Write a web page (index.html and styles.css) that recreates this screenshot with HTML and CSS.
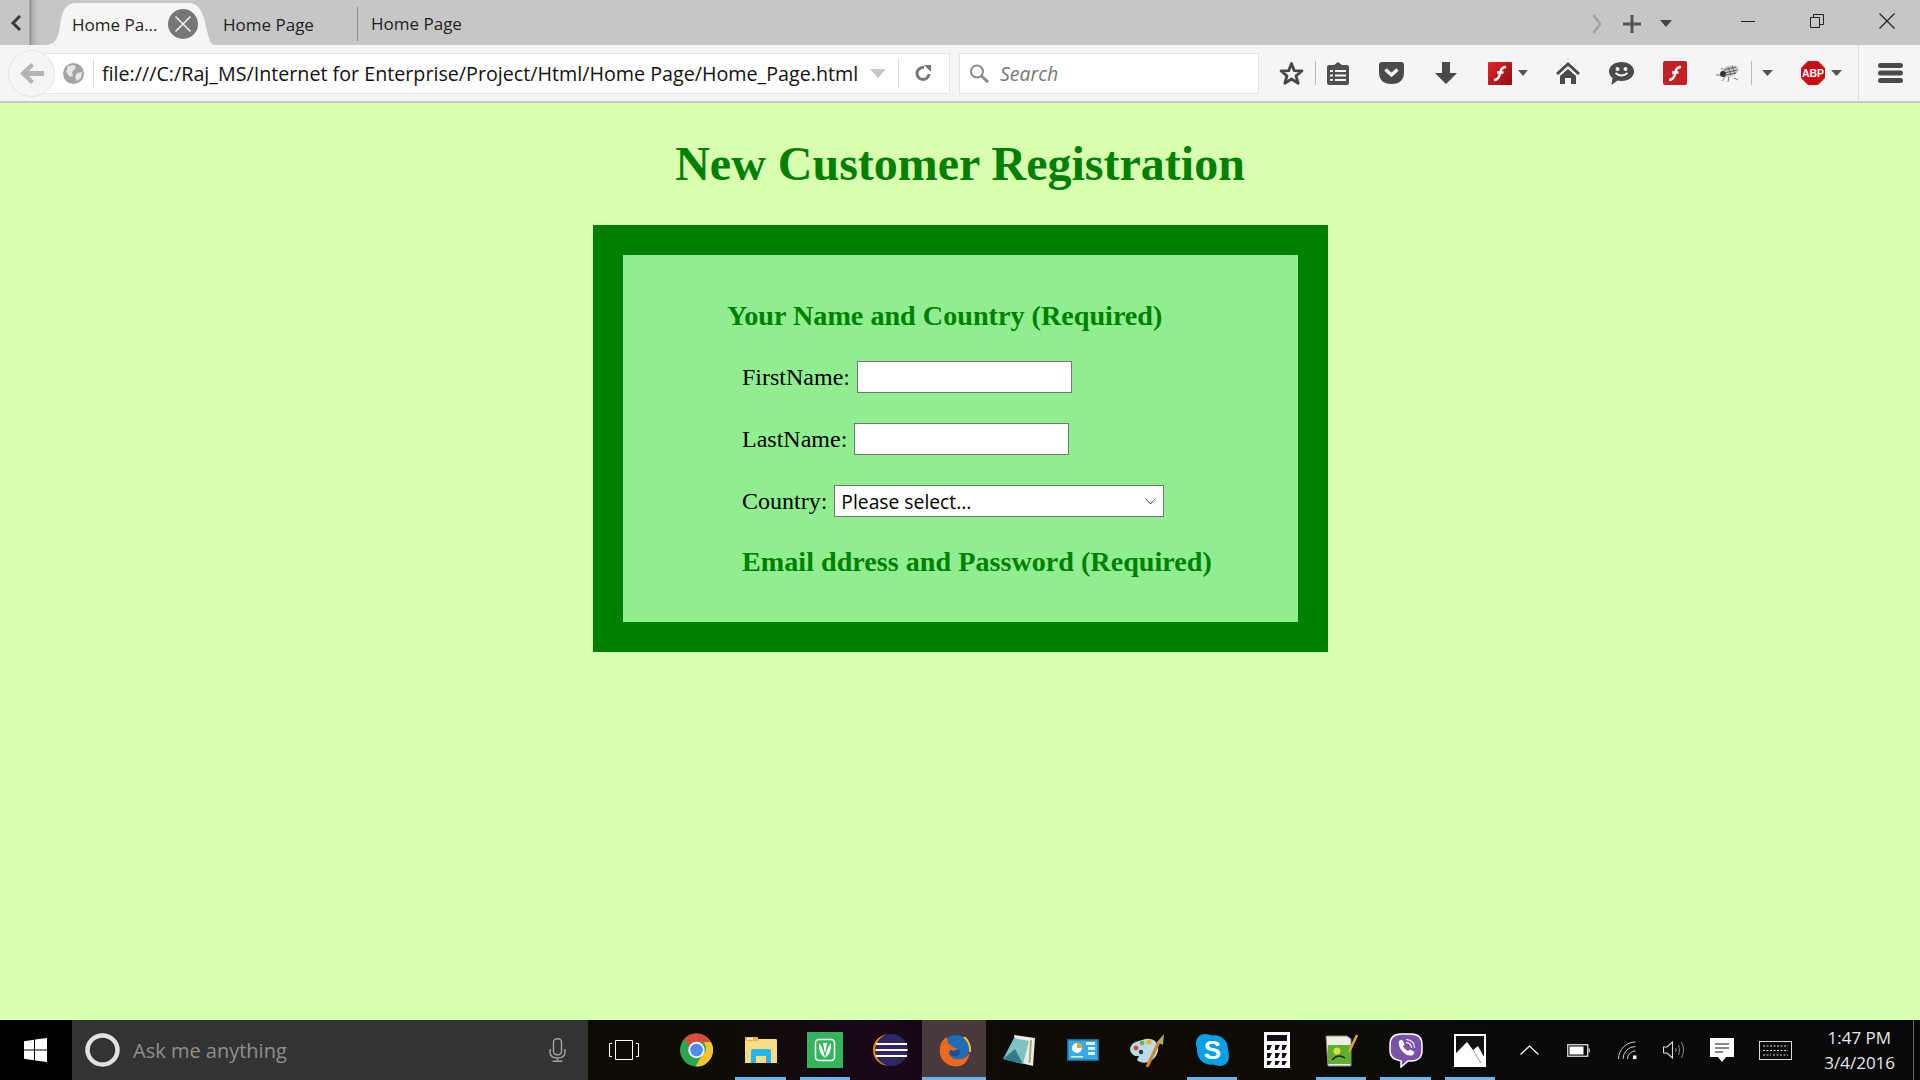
FILE: index.html
```html
<!DOCTYPE html>
<html>
<head>
<meta charset="utf-8">
<title>Home Page</title>
<link rel="stylesheet" href="styles.css">
</head>
<body>

<div class="tabbar">
  <div class="tab-scroll-left"><svg width="12" height="16" viewBox="0 0 12 16"><path d="M10 1 L3 8 L10 15" fill="none" stroke="#3c3c3c" stroke-width="3"/></svg></div>
  <div class="tab active">
    <span class="tab-title">Home Pa...</span>
    <span class="tab-close"><svg width="30" height="30" viewBox="0 0 30 30"><circle cx="15" cy="15" r="15" fill="#777"/><path d="M7.500 7.500 L22.500 22.500 M22.500 7.500 L7.500 22.500" stroke="#f0f0f0" stroke-width="1.600"/></svg></span>
  </div>
  <div class="tab tab-second">Home Page</div>
  <div class="tab tab-sep">Home Page</div>
  <div class="tabbar-right">
    <svg width="10" height="20" viewBox="0 0 10 20"><path d="M1.500 1 L8 10 L1.500 19" fill="none" stroke="#a0a0a0" stroke-width="2.400"/></svg>
    <svg class="tab-plus" width="18" height="18" viewBox="0 0 18 18"><path d="M9 0 V18 M0 9 H18" stroke="#555" stroke-width="3"/></svg>
    <svg class="tab-menu" width="12" height="7" viewBox="0 0 12 7"><path d="M0 0 H12 L6 7 Z" fill="#444"/></svg>
  </div>
  <div class="window-buttons">
    <svg width="14" height="14" viewBox="0 0 14 14"><path d="M0 7.500 H14" stroke="#222"/></svg>
    <svg width="14" height="14" viewBox="0 0 14 14"><path d="M.5 3.500 H9.500 V13.500 H.5 Z M3.500 3 V.5 H13.500 V10.500 H10" fill="none" stroke="#222"/></svg>
    <svg width="16" height="16" viewBox="0 0 16 16"><path d="M.5 .5 L15.500 15.500 M15.500 .5 L.5 15.500" stroke="#222" stroke-width="1.200"/></svg>
  </div>
</div>

<div class="navbar">
  <div class="back-btn"><svg width="24" height="21" viewBox="0 0 24 21"><path d="M11 0 L0 10.500 L11 21 L14 18 L9 13 H24 V8 H9 L14 3 Z" fill="#b4b4b4"/></svg></div>
  <div class="urlbar">
    <svg class="globe" width="21" height="21" viewBox="0 0 21 21"><circle cx="10.500" cy="10.500" r="10.500" fill="#a4a4a4"/><path d="M5 3 L11 2 L13 5 L9 9 L10 13 L7 14 L3 9 Z M14 10 L19 9 L18 15 L14 18 L12 14 Z" fill="#e6e6e6"/></svg>
    <span class="url-divider"></span>
    <span class="url-text">file:///C:/Raj_MS/Internet for Enterprise/Project/Html/Home Page/Home_Page.html</span>
    <svg class="url-drop" width="16" height="9" viewBox="0 0 16 9"><path d="M0 0 H16 L8 9 Z" fill="#c6c6c6"/></svg>
    <span class="url-reload"><svg width="17" height="16" viewBox="0 0 17 16"><path d="M14 9 A6 6 0 1 1 9 2.500" fill="none" stroke="#777" stroke-width="3"/><path d="M9 0 H16 V7 Z" fill="#777"/></svg></span>
  </div>
  <div class="searchbar">
    <svg width="22" height="19" viewBox="0 0 22 19"><circle cx="8" cy="7.500" r="6" fill="none" stroke="#8a8a8a" stroke-width="2"/><path d="M12.500 12 L19 18" stroke="#8a8a8a" stroke-width="3"/></svg>
    <span class="search-text">Search</span>
  </div>
  <div class="toolbar">
    <svg class="t-star" width="25" height="25" viewBox="0 0 25 25"><path d="M12.500 2.500 L15.300 9.700 L23 10 L17 14.800 L19.200 22.300 L12.500 18 L5.800 22.300 L8 14.800 L2 10 L9.700 9.700 Z" fill="none" stroke="#474747" stroke-width="2.800" stroke-linejoin="round"/></svg>
    <span class="t-divider d-first"></span>
    <svg class="t-list" width="22" height="23" viewBox="0 0 22 23"><path d="M11 0 L15 3 H20 Q22 3 22 5 V21 Q22 23 20 23 H2 Q0 23 0 21 V5 Q0 3 2 3 H7 Z" fill="#505050"/><path d="M3 9 H6 M8 9 H19 M3 13.500 H6 M8 13.500 H19 M3 18 H6 M8 18 H19" stroke="#f5f5f5" stroke-width="2"/></svg>
    <svg class="t-pocket" width="25" height="22" viewBox="0 0 25 22"><path d="M0 3 Q0 0 3 0 H22 Q25 0 25 3 V10 Q25 22 12.500 22 Q0 22 0 10 Z" fill="#4a4a4a"/><path d="M6.500 7.500 L12.500 13 L18.500 7.500" fill="none" stroke="#f5f5f5" stroke-width="3.500"/></svg>
    <svg class="t-down" width="22" height="22" viewBox="0 0 22 22"><path d="M7 0 H15 V11 H22 L11 22 L0 11 H7 Z" fill="#4a4a4a"/></svg>
    <svg class="t-flash" width="24" height="23" viewBox="0 0 24 23"><defs><linearGradient id="fl1" x1="0" y1="0" x2="1" y2="1"><stop offset="0" stop-color="#e0282c"/><stop offset="1" stop-color="#8f0d12"/></linearGradient></defs><rect width="24" height="23" rx="1" fill="url(#fl1)"/><path d="M6 18 Q11 18 12.500 10 Q13.500 5 18 5 M9 10.500 H15.500" fill="none" stroke="#fff" stroke-width="2.400"/></svg>
    <svg class="t-caret c-flash" width="10" height="6" viewBox="0 0 10 6"><path d="M0 0 H10 L5 6 Z" fill="#555"/></svg>
    <svg class="t-home" width="24" height="22" viewBox="0 0 24 22"><path d="M12 0 L24 11 L22 13 L12 4 L2 13 L0 11 Z" fill="#4a4a4a"/><path d="M12 7 L20 14 V22 H15 V16 H9 V22 H4 V14 Z" fill="#4a4a4a"/></svg>
    <svg class="t-chat" width="25" height="23" viewBox="0 0 25 23"><path d="M12.500 0 C19.500 0 25 4 25 9.500 C25 15 19.500 19 12.500 19 C11 19 9.500 18.800 8.500 18.500 L2.500 23 L3.500 16 C1.500 14.500 0 12.200 0 9.500 C0 4 5.500 0 12.500 0 Z" fill="#4a4a4a"/><circle cx="8.500" cy="7" r="2" fill="#f5f5f5"/><circle cx="16.500" cy="7" r="2" fill="#f5f5f5"/><path d="M6.500 11 Q12.500 16 18.500 11" fill="none" stroke="#f5f5f5" stroke-width="2"/></svg>
    <svg class="t-flash2" width="24" height="24" viewBox="0 0 24 24"><rect width="24" height="24" rx="2" fill="#c41f25"/><path d="M6 19 Q11 19 12.500 11 Q13.500 6 18 6 M9 11.500 H15.500" fill="none" stroke="#fff" stroke-width="2.400"/></svg>
    <svg class="t-bug" width="24" height="18" viewBox="0 0 24 18"><path d="M0 11 H8 M6 17 L11 11 M12 18 L13 12 M18 14 L22 16 M5 4 L10 8" stroke="#555" stroke-width=".8"/><ellipse cx="14" cy="7" rx="9" ry="5.500" fill="#c8c8c8" transform="rotate(-15 14 7)"/><path d="M8 6 L20 3 M8 9 L21 6 M10 11 L20 9 M12 3 L15 11 M16 2 L19 10" stroke="#666" stroke-width="1"/><circle cx="7" cy="10" r="3" fill="#333"/></svg>
    <span class="t-divider d-bug"></span>
    <svg class="t-caret c-bug" width="11" height="6" viewBox="0 0 11 6"><path d="M0 0 H11 L5.500 6 Z" fill="#555"/></svg>
    <svg class="t-abp" width="24" height="24" viewBox="0 0 24 24"><path d="M7 0 H17 L24 7 V17 L17 24 H7 L0 17 V7 Z" fill="#cf0c12"/><text x="12" y="16" class="abp-text">ABP</text></svg>
    <svg class="t-caret c-abp" width="11" height="6" viewBox="0 0 11 6"><path d="M0 0 H11 L5.500 6 Z" fill="#555"/></svg>
    <span class="t-divider d-menu"></span>
    <svg class="t-burger" width="25" height="20" viewBox="0 0 25 20"><path d="M2.500 2.500 H22.500 M2.500 10 H22.500 M2.500 17.500 H22.500" stroke="#4a4a4a" stroke-width="5" stroke-linecap="round"/></svg>
  </div>
</div>

<main class="page">
  <h1>New Customer Registration</h1>
  <div class="outer-box">
    <form class="inner-box">
      <h3 class="section-first">Your Name and Country (Required)</h3>
      <div class="field field-first"><label for="first">FirstName:</label><input type="text" id="first"></div>
      <div class="field"><label for="last">LastName:</label><input type="text" id="last"></div>
      <div class="field"><label for="country">Country:</label>
        <div class="select-wrap">
          <select id="country"><option>Please select...</option></select>
          <svg class="select-arrow" width="11" height="7" viewBox="0 0 11 7"><path d="M.5 .5 L5.500 6 L10.500 .5" fill="none" stroke="#555"/></svg>
        </div>
      </div>
      <h3 class="section-second">Email ddress and Password (Required)</h3>
    </form>
  </div>
</main>

<div class="taskbar">
  <div class="start"><svg width="23" height="24" viewBox="0 0 23 24"><path d="M0 3.300 L10 1.800 V11.500 H0 Z M11 1.600 L23 0 V11.500 H11 Z M0 12.500 H10 V22.200 L0 20.700 Z M11 12.500 H23 V24 L11 22.400 Z" fill="#fff"/></svg></div>
  <div class="cortana">
    <svg width="35" height="34" viewBox="0 0 35 34"><ellipse cx="17.500" cy="17" rx="15" ry="14.500" fill="none" stroke="#e2e2e2" stroke-width="4.500"/></svg>
    <span class="ask">Ask me anything</span>
    <svg class="mic" width="17" height="24" viewBox="0 0 17 24"><rect x="4.500" y=".8" width="8" height="16" rx="3.500" fill="none" stroke="#a0a0a0" stroke-width="1.500"/><path d="M1 11 V14 Q1 20 8.500 20 Q16 20 16 14 V11 M8.500 20 V23 M3.500 23.200 H13.500" fill="none" stroke="#a0a0a0" stroke-width="1.500"/></svg>
  </div>
  <div class="task-view"><svg width="30" height="20" viewBox="0 0 30 20"><path d="M6.500 .5 H23.500 V19.500 H6.500 Z" fill="none" stroke="#fff"/><path d="M3 3.500 H.5 V16.500 H3 M27 3.500 H29.500 V16.500 H27" fill="none" stroke="#fff"/></svg></div>
  <div class="apps">
    <div class="app"><svg width="33" height="34" viewBox="0 0 34 34"><circle cx="17" cy="17" r="17" fill="#2fa44f"/><path d="M17 0 A17 17 0 0 1 32 9 H17 A8 8 0 0 0 9.500 14 L4.500 5.500 A17 17 0 0 1 17 0 Z" fill="#dd4b3e"/><path d="M32 9 A17 17 0 0 1 16 34 L23 22 A8 8 0 0 0 24 9 Z" fill="#f6c52e"/><circle cx="17" cy="17" r="8.500" fill="#f2f2f2"/><circle cx="17" cy="17" r="6.500" fill="#4d8bf0"/></svg></div>
    <div class="app running"><svg width="32" height="26" viewBox="0 0 32 26"><path d="M0 2 Q0 0 2 0 H10 L12 2 H31 Q32 2 32 4 V26 H0 Z" fill="#f8dd82"/><rect x="0" y="0" width="13" height="4" fill="#eab93f"/><rect x="2" y="1" width="6" height="1.500" fill="#fff"/><path d="M6 14 Q6 12 8 12 H24 Q26 12 26 14 V26 H21 V19 H11 V26 H6 Z" fill="#25b4ea"/></svg></div>
    <div class="app running"><svg width="36" height="36" viewBox="0 0 36 36"><rect width="36" height="36" fill="#34b45c"/><rect x="8.500" y="7.500" width="19" height="21" rx="3.500" fill="none" stroke="#fff" stroke-width="1.500"/><path d="M18 26 Q11 21 12 11 Q16 15 18 26 Q20 15 24 11 Q25 21 18 26 Z M18 22 L16 11 H20 Z" fill="#fff"/></svg></div>
    <div class="app"><svg width="36" height="32" viewBox="0 0 36 32"><path d="M16 .5 A17 16 0 0 0 16 31.500 A15 15.500 0 0 1 16 .5 Z" fill="#f08a12"/><circle cx="19.500" cy="16" r="16" fill="#2f2764"/><path d="M4 10 H35 M3.500 16 H35.500 M4 22 H35" stroke="#fff" stroke-width="2.200"/></svg></div>
    <div class="app running active"><svg width="33" height="33" viewBox="0 0 33 33"><circle cx="18" cy="14" r="13" fill="#1f6db5"/><path d="M26 3 Q33 9 32 18" fill="none" stroke="#f7c23c" stroke-width="2"/><path d="M2 13 Q0 28 14 32 Q29 35 32 18 Q27 27 17 25 Q10 23 12 16 Q17 18 20 15 Q14 13 13 11 Q9 10 9 3 Q3 6 2 13 Z" fill="#e9691d"/><path d="M12 16 Q17 18 20 15 Q23 17 21 21 Q15 24 11 20 Z" fill="#1d4f96"/></svg></div>
    <div class="app"><svg width="32" height="31" viewBox="0 0 32 31"><path d="M11 0 L32 3 L30 31 L14 27 Z" fill="#e6ecec"/><path d="M0 24 L11 3 L26 6 L20 29 Z" fill="#7fc0c4"/><path d="M0 24 L12 14 L20 29 Z" fill="#2d7e88"/><path d="M28 5 L26.500 28" stroke="#b5a66e" stroke-width="2"/></svg></div>
    <div class="app"><svg width="32" height="22" viewBox="0 0 32 22"><rect x=".75" y=".75" width="30.500" height="20.500" fill="#3aa9e2" stroke="#146a96" stroke-width="1.500"/><circle cx="10" cy="9" r="5" fill="#fff"/><path d="M10 9 V4 A5 5 0 0 1 15 9 Z" fill="#f0a030"/><rect x="19" y="3" width="9" height="3" fill="#d8f0fb"/><rect x="21" y="8" width="7" height="3" fill="#d8f0fb"/><rect x="21" y="13" width="7" height="3" fill="#d8f0fb"/><rect x="4" y="17" width="12" height="1.500" fill="#d8f0fb"/></svg></div>
    <div class="app"><svg width="35" height="33" viewBox="0 0 35 33"><path d="M15 5 C25 3 31 11 27 20 C23 29 12 31 7 26 L9 22 C3 23 -2 17 1 12 C4 7 10 7 15 5 Z" fill="#b8dbec"/><circle cx="6" cy="14" r="2.400" fill="#d9452c"/><circle cx="12" cy="9" r="2.400" fill="#7bb53d"/><circle cx="19" cy="8" r="2.600" fill="#e8b72c"/><circle cx="11" cy="18" r="2.200" fill="#333"/><path d="M17 33 L29 8" stroke="#d98324" stroke-width="3"/><path d="M27 8 L34 0 L33 11 Z" fill="#b9a47a"/></svg></div>
    <div class="app running"><svg width="33" height="32" viewBox="0 0 33 32"><path d="M9 0 C12 0 14 1 16 1.500 C26 0 33 8 32 17 C33 19 33 21 33 23 C33 28 29 32 24 32 C21 32 19 31 17 30.500 C7 32 0 24 1 14 C0 12 0 11 0 9 C0 4 4 0 9 0 Z" fill="#08a0e4"/><text x="16.500" y="25" class="skype-text">S</text></svg></div>
    <div class="app"><svg width="26" height="36" viewBox="0 0 26 36"><rect width="26" height="36" fill="#fff"/><rect x="3" y="3" width="20" height="6" fill="#111"/><path d="M3 13 H8 L5.500 18 H3 Z M11 13 H16 L13.500 18 H11 Z M18 13 H23 L20.500 18 H18 Z M3 21 H8 L5.500 26 H3 Z M11 21 H16 L13.500 26 H11 Z M18 21 H23 L20.500 26 H18 Z M3 29 H8 L5.500 33 H3 Z M11 29 H16 L13.500 33 H11 Z M18 29 H23 L20.500 33 H18 Z" fill="#111"/></svg></div>
    <div class="app running"><svg width="33" height="33" viewBox="0 0 33 33"><path d="M1 2 H22 L26 5 L26 32 H3 Z" fill="#eeeee2" stroke="#888"/><rect x="3" y="11" width="23" height="19" fill="#5fb02e"/><circle cx="12" cy="17" r="3.500" fill="#d7e04a"/><path d="M7 26 Q13 19 20 24" fill="none" stroke="#222" stroke-width="1.500"/><path d="M24 18 L32 1" stroke="#e2a72a" stroke-width="2.500"/></svg></div>
    <div class="app running"><svg width="34" height="35" viewBox="0 0 34 35"><path d="M12 1 H22 C29 1 33 5 33 12 V18 C33 24 29 28 22 28 H19 L12 34 V28 C5 27 1 24 1 18 V12 C1 5 5 1 12 1 Z" fill="#7a52a8" stroke="#fff" stroke-width="1.500"/><path d="M10 8 L13 6.500 L15.500 11 L14 13.500 Q16 17 19 18 L21 16.500 L25.500 19 L24 22 Q19 24 14 19 Q9 14 10 8 Z" fill="#fff"/><path d="M17 6.500 Q25.500 7 25.500 15 M17 9.500 Q22.500 10 22.500 15" fill="none" stroke="#fff" stroke-width="1.100"/></svg></div>
    <div class="app running"><svg width="32" height="33" viewBox="0 0 32 33"><rect width="32" height="33" fill="#fff"/><rect x="2" y="2" width="28" height="20" fill="#111"/><path d="M2 19 L13 8 L19 16 L24 12 L30 23 V31 H2 Z" fill="#fff"/><path d="M19 16 L27 29" stroke="#999" stroke-width="1"/></svg></div>
  </div>
  <div class="tray">
    <svg class="tray-up" width="19" height="10" viewBox="0 0 19 10"><path d="M.5 9.500 L9.500 1 L18.500 9.500" fill="none" stroke="#fff" stroke-width="1.200"/></svg>
    <svg class="tray-batt" width="23" height="13" viewBox="0 0 23 13"><rect x=".75" y=".75" width="20" height="11.500" fill="none" stroke="#ddd" stroke-width="1.300"/><rect x="2.500" y="2.500" width="14" height="8" fill="#fff"/><rect x="21.500" y="4.500" width="1.500" height="4" fill="#bbb"/></svg>
    <svg class="tray-wifi" width="19" height="18" viewBox="0 0 19 18"><path d="M.5 18 A17 17 0 0 1 17.500 1 M5 18 A12.500 12.500 0 0 1 17.500 5.500 M9.500 18 A8 8 0 0 1 17.500 10" fill="none" stroke="#ccc"/><rect x="15" y="14.500" width="3.500" height="3.500" fill="#fff"/></svg>
    <svg class="tray-vol" width="22" height="18" viewBox="0 0 22 18"><path d="M.5 6 H4 L9.500 1 V17 L4 12 H.5 Z" fill="none" stroke="#ddd" stroke-width="1.100"/><path d="M12.500 7 Q14 9 12.500 11 M15.500 4 Q18 9 15.500 14 M18.500 1 Q22.500 9 18.500 17" fill="none" stroke="#888"/></svg>
    <svg class="tray-msg" width="24" height="24" viewBox="0 0 24 24"><path d="M0 0 H24 V19 H16 L12 24 L8 19 H0 Z" fill="#fff"/><path d="M5 6 H19 M5 10 H19 M5 14 H13" stroke="#111" stroke-width="1.200"/></svg>
    <svg class="tray-keys" width="33" height="19" viewBox="0 0 33 19"><rect x=".5" y=".5" width="32" height="18" fill="none" stroke="#ddd"/><path d="M4 5 H29 M4 9.500 H29 M4 14 H12 M14 14 H29" stroke="#ddd" stroke-dasharray="2 1.500"/></svg>
    <div class="clock"><div>1:47 PM</div><div>3/4/2016</div></div>
    <span class="show-desktop"></span>
  </div>
</div>

</body>
</html>
```

FILE: styles.css
```css
html, body {
  margin: 0;
  height: 100%;
}

body {
  width: 1920px;
  height: 1080px;
  overflow: hidden;
  display: flex;
  flex-direction: column;
  background-color: #d9ffb0;
  font-family: "Open Sans", sans-serif;
}

svg {
  flex: none;
}

/* Tab strip */
.tabbar {
  height: 45px;
  flex: none;
  display: flex;
  align-items: center;
  background-color: #c6c6c6;
  font-size: 17px;
  color: #222;
}

.tab-scroll-left {
  width: 38px;
  flex: none;
  align-self: stretch;
  padding: 0 0 0 10px;
  box-sizing: border-box;
  display: flex;
  align-items: center;
  background: linear-gradient(90deg, transparent 29px, #8a8a8a 30px, #adadad 32px, #c6c6c6 38px);
}

.tab {
  padding-top: 3px;
  white-space: nowrap;
  box-sizing: border-box;
}

.tab.active {
  align-self: stretch;
  margin-left: 7px;
  width: 170px;
  padding-left: 27px;
  display: flex;
  align-items: center;
  background-color: #f5f5f5;
  clip-path: path("M0 45 C9 45 13 40 15 26 C17 10 21 3 32 3 H144 C152 3 157 9 160 22 C163 36 165 45 170 45 Z");
}

.tab-title {
  flex: 1;
}

.tab-close {
  display: flex;
  margin-right: 17px;
}

.tab-second {
  width: 135px;
  margin-left: 7px;
  padding-left: 1px;
}

.tab-sep {
  border-left: 1px solid #8e8e8e;
  height: 34px;
  line-height: 34px;
  margin-top: 3px;
  padding: 0 0 0 13px;
}

.tabbar-right {
  margin-left: auto;
  display: flex;
  align-items: center;
  margin-right: 69px;
  padding-top: 2px;
}

.tab-plus {
  margin-left: 21px;
}

.tab-menu {
  margin-left: 19px;
}

.window-buttons {
  width: 179px;
  display: flex;
  align-items: center;
  justify-content: space-between;
  padding: 0 25px 3px 0;
  box-sizing: border-box;
}

/* Url bar and toolbar */
.navbar {
  height: 58px;
  flex: none;
  box-sizing: border-box;
  display: flex;
  align-items: center;
  background-color: #f5f5f5;
  border-bottom: 2px solid #c8c8c8;
}

.back-btn {
  width: 47px;
  height: 47px;
  box-sizing: border-box;
  flex: none;
  margin-left: 8px;
  border: 1px solid #e2e2e2;
  border-radius: 50%;
  background-color: #f5f5f5;
  display: flex;
  align-items: center;
  justify-content: center;
  position: relative;
  z-index: 1;
}

.urlbar {
  width: 920px;
  height: 41px;
  margin-left: -25px;
  flex: none;
  box-sizing: border-box;
  background-color: #fff;
  border: 1px solid #e4e4e4;
  display: flex;
  align-items: center;
  padding-left: 32px;
}

.url-divider {
  width: 1px;
  height: 28px;
  background-color: #ddd;
  margin: 0 8px 0 9px;
}

.url-text {
  font-size: 19.7px;
  color: #111;
  white-space: nowrap;
  flex: none;
  width: 756px;
}

.url-drop {
  margin-left: 12px;
}

.url-reload {
  margin-left: 12px;
  padding-left: 16px;
  border-left: 1px solid #ddd;
  height: 30px;
  display: flex;
  align-items: center;
}

.searchbar {
  width: 300px;
  height: 41px;
  flex: none;
  margin-left: 9px;
  box-sizing: border-box;
  background-color: #fff;
  border: 1px solid #e4e4e4;
  display: flex;
  align-items: center;
  padding-left: 9px;
}

.search-text {
  font-style: italic;
  font-size: 19.5px;
  color: #777;
  margin-left: 9px;
}

.toolbar {
  flex: 1;
  display: flex;
  align-items: center;
  padding-left: 20px;
}

.t-divider {
  width: 1px;
  height: 24px;
  background-color: #bbb;
  flex: none;
}

.d-first { margin-left: 11px; }
.d-bug { margin-left: 11px; }

.d-menu {
  height: 56px;
  background-color: #ddd;
  margin-left: 16px;
}

.t-list { margin-left: 11px; }
.t-pocket { margin-left: 30px; }
.t-down { margin-left: 31px; }
.t-flash { margin-left: 31px; }
.c-flash { margin-left: 6px; }
.t-home { margin-left: 28px; }
.t-chat { margin-left: 29px; }
.t-flash2 { margin-left: 29px; }
.t-bug { margin-left: 29px; }
.c-bug { margin-left: 10px; }
.t-abp { margin-left: 28px; }
.c-abp { margin-left: 6px; }
.t-burger { margin-left: 19px; }

.abp-text {
  font-family: "Liberation Sans", sans-serif;
  font-weight: bold;
  font-size: 10.5px;
  fill: #fff;
  text-anchor: middle;
}

/* Page content */
.page {
  flex: 1;
  font-family: "Liberation Serif", serif;
}

h1 {
  margin: 38px 0 0;
  font-size: 48px;
  line-height: 46px;
  text-align: center;
  color: green;
}

.outer-box {
  width: 735px;
  height: 427px;
  box-sizing: border-box;
  margin: 38px 0 0 593px;
  border: 30px solid green;
  background-color: lightgreen;
}

.inner-box {
  padding: 0 0 0 104px;
}

h3 {
  margin: 0;
  font-size: 28.16px;
  color: green;
  line-height: 32px;
}

.section-first {
  padding-top: 45px;
}

.section-second {
  margin-left: 15px;
  margin-top: 29px;
}

.field {
  margin: 30px 0 0 15px;
  height: 32px;
  display: flex;
  align-items: center;
  font-size: 24px;
  color: #000;
}

.field-first {
  margin-top: 29px;
}

.field input, .select-wrap {
  margin-left: 7px;
}

.field input, .field select {
  box-sizing: border-box;
  height: 32px;
  background-color: #fff;
  border: 1px solid #767676;
  border-radius: 0;
}

.field input {
  width: 215px;
}

.select-wrap {
  position: relative;
  display: flex;
}

.field select {
  width: 330px;
  appearance: none;
  font-family: "Open Sans", sans-serif;
  font-size: 19.3px;
  padding: 0 0 0 6px;
  color: #000;
}

.select-arrow {
  position: absolute;
  right: 8px;
  top: 13px;
  pointer-events: none;
}

/* Windows taskbar */
.taskbar {
  height: 60px;
  flex: none;
  display: flex;
  align-items: center;
  background: linear-gradient(90deg, #0a0906 0, #0f0c05 38%, #170a16 44%, #180816 48%, #100c05 52%, #0f0c05 66%, #0a0a0a 78%, #090909 100%);
  color: #fff;
}

.start {
  width: 72px;
  flex: none;
  align-self: stretch;
  box-sizing: border-box;
  padding-right: 2px;
  background-color: #000;
  display: flex;
  align-items: center;
  justify-content: center;
}

.cortana {
  width: 516px;
  flex: none;
  align-self: stretch;
  box-sizing: border-box;
  background-color: #333;
  display: flex;
  align-items: center;
  padding-left: 13px;
}

.ask {
  font-size: 20px;
  color: #8f8f8f;
  margin-left: 13px;
  flex: 1;
}

.mic {
  margin-right: 22px;
}

.task-view {
  width: 72px;
  flex: none;
  display: flex;
  justify-content: center;
}

.apps {
  display: flex;
  align-self: stretch;
  padding-left: 3.75px;
}

.app {
  width: 64.5px;
  flex: none;
  display: flex;
  align-items: center;
  justify-content: center;
  position: relative;
}

.app.running::after {
  content: "";
  position: absolute;
  left: 7px;
  right: 7px;
  bottom: 0;
  height: 3px;
  background-color: #6cb4ee;
}

.app.active {
  background-color: #47393c;
}

.app.active::after {
  left: 0;
  right: 0;
}

.tray {
  flex: 1;
  align-self: stretch;
  display: flex;
  align-items: center;
  padding-left: 18px;
}

.tray-batt { margin-left: 28px; }
.tray-wifi { margin-left: 28px; }
.tray-vol { margin-left: 26px; }
.tray-msg { margin-left: 25px; }
.tray-keys { margin-left: 25px; }

.clock {
  width: 70px;
  margin-left: 32px;
  text-align: center;
  font-size: 17px;
  line-height: 25px;
  color: #e8e8e8;
  white-space: nowrap;
  flex: none;
}

.show-desktop {
  width: 1px;
  height: 100%;
  margin-left: 19px;
  background-color: #666;
  flex: none;
}

.skype-text {
  font-family: "Liberation Sans", sans-serif;
  font-weight: bold;
  font-size: 26px;
  fill: #fff;
  text-anchor: middle;
}
```
